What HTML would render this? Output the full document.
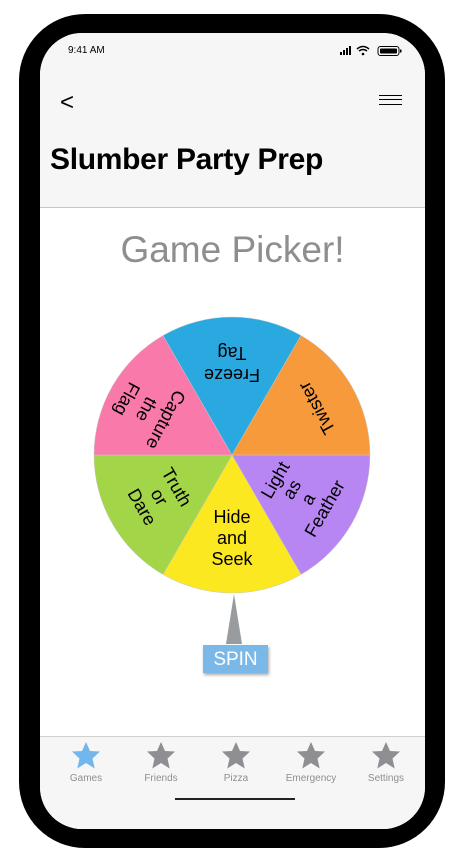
<!DOCTYPE html>
<html><head><meta charset="utf-8"><style>
html,body{margin:0;padding:0;background:#fff;width:463px;height:856px;overflow:hidden;font-family:"Liberation Sans",sans-serif}
.phone{position:absolute;left:19px;top:14px;width:426px;height:834px;background:#000;border-radius:66px}
.screen{position:absolute;left:40px;top:33px;width:385px;height:796px;background:#fff;border-radius:42px;overflow:hidden}
.hdr{position:absolute;left:0;top:0;width:385px;height:174px;background:#f6f6f6;border-bottom:1.5px solid #c8c8c8}
.tab{position:absolute;left:0;top:703px;width:385px;height:93px;background:#f6f6f6;border-top:1px solid #d0d0d0}
.t{position:absolute;top:36px;width:70px;text-align:center;font-size:10px;color:#8e8e93}
</style></head><body>
<div class="phone"></div>
<div class="screen">
 <div class="hdr">
  <div style="position:absolute;left:28px;top:12px;font-size:10px;color:#000">9:41 AM</div>
  <svg style="position:absolute;left:300px;top:12px" width="65" height="12">
   <rect x="0" y="7" width="2" height="3" fill="#000"/><rect x="3" y="5" width="2" height="5" fill="#000"/><rect x="6" y="3" width="2" height="7" fill="#000"/><rect x="9" y="1" width="2" height="9" fill="#000"/>
   <path d="M17 4 Q23 -1 29 4 M19 6 Q23 3 27 6" stroke="#000" stroke-width="1.5" fill="none"/><circle cx="23" cy="9" r="1.3" fill="#000"/>
   <rect x="38" y="1.5" width="21" height="9" rx="2.5" fill="none" stroke="#000" stroke-width="1"/><rect x="40" y="3.5" width="17" height="5" rx="1" fill="#000"/><rect x="60" y="4.5" width="1.5" height="3" fill="#000"/>
  </svg>
  <div style="position:absolute;left:20px;top:56px;font-size:24px;color:#000">&lt;</div>
  <div style="position:absolute;left:339px;top:62px;width:23px;height:8px;border-top:1px solid #000;border-bottom:1px solid #000"><div style="margin-top:3px;border-top:1px solid #000"></div></div>
  <div style="position:absolute;left:10px;top:110px;font-size:30px;font-weight:bold;color:#000;letter-spacing:-0.3px">Slumber Party Prep</div>
 </div>
 <div style="position:absolute;left:0;top:196px;width:385px;text-align:center;font-size:37px;color:#8e8e8e">Game Picker!</div>
 <svg style="position:absolute;left:0;top:0" width="385" height="700" font-family="Liberation Sans, sans-serif" font-size="18" text-anchor="middle">
  <g transform="translate(192 422)" stroke="#c8c8c8" stroke-width="0.5">
   <path d="M0 0 L138 0 A138 138 0 0 1 69 119.5 Z" fill="#b886f2"/>
   <path d="M0 0 L69 119.5 A138 138 0 0 1 -69 119.5 Z" fill="#fbe821"/>
   <path d="M0 0 L-69 119.5 A138 138 0 0 1 -138 0 Z" fill="#a2d548"/>
   <path d="M0 0 L-138 0 A138 138 0 0 1 -69 -119.5 Z" fill="#fa79ab"/>
   <path d="M0 0 L-69 -119.5 A138 138 0 0 1 69 -119.5 Z" fill="#2aa9e0"/>
   <path d="M0 0 L69 -119.5 A138 138 0 0 1 138 0 Z" fill="#f79a3c"/>
  </g>
  <g transform="translate(192 422)" fill="#000">
   <g><text x="0" y="68">Hide</text><text x="0" y="89">and</text><text x="0" y="110">Seek</text></g>
   <g transform="rotate(180)"><text x="0" y="86">Freeze</text><text x="0" y="108">Tag</text></g>
   <g transform="rotate(-119)"><text x="0" y="103">Twister</text></g>
   <g transform="rotate(118)"><text x="0" y="81">Capture</text><text x="0" y="103">the</text><text x="0" y="125">Flag</text></g>
   <g transform="rotate(60)"><text x="0" y="70">Truth</text><text x="0" y="90">or</text><text x="0" y="110">Dare</text></g>
   <g transform="rotate(-60)"><text x="0" y="56">Light</text><text x="0" y="75">as</text><text x="0" y="94">a</text><text x="0" y="113">Feather</text></g>
  </g>
  <path d="M194 561 L202 611 L186 611 Z" fill="#999c9e"/>
 </svg>
 <div style="position:absolute;left:163px;top:612px;width:65px;height:28px;background:#7ab8e8;color:#fff;font-size:19px;text-align:center;line-height:29px;box-shadow:1px 2px 3px rgba(0,0,0,.35)">SPIN</div>
 <div class="tab">
  <svg width="385" height="40" style="position:absolute;left:0;top:4px">
   <defs><path id="s" d="M0 -14 L4 -5 L14 -4.5 L6.5 2.5 L8.7 12.5 L0 7 L-8.7 12.5 L-6.5 2.5 L-14 -4.5 L-4 -5 Z"/></defs>
   <use href="#s" x="46" y="15" fill="#72b6ee"/>
   <use href="#s" x="121" y="15" fill="#8e8e93"/>
   <use href="#s" x="196" y="15" fill="#8e8e93"/>
   <use href="#s" x="271" y="15" fill="#8e8e93"/>
   <use href="#s" x="346" y="15" fill="#8e8e93"/>
  </svg>
  <div class="t" style="left:11px">Games</div>
  <div class="t" style="left:86px">Friends</div>
  <div class="t" style="left:161px">Pizza</div>
  <div class="t" style="left:236px">Emergency</div>
  <div class="t" style="left:311px">Settings</div>
  <div style="position:absolute;left:135px;top:61px;width:120px;height:1.5px;background:#222"></div>
 </div>
</div>
</body></html>
